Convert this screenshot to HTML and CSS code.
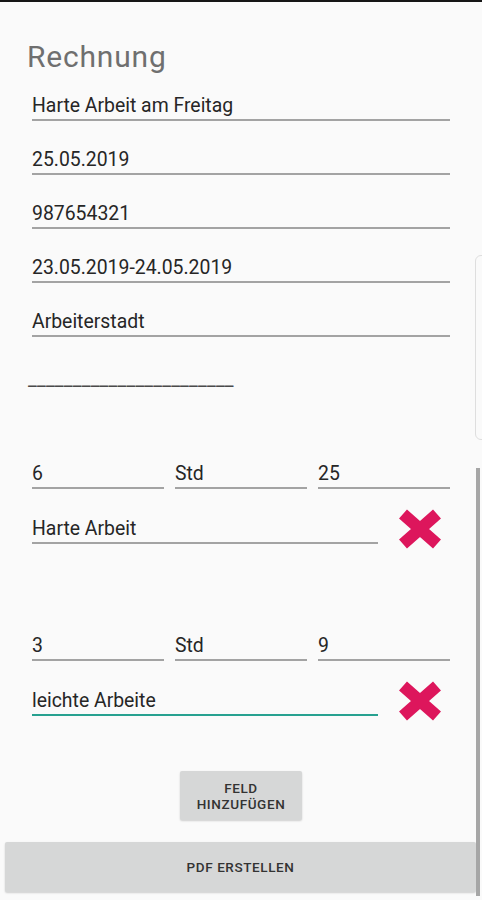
FILE: index.html
```html
<!DOCTYPE html>
<html>
<head>
    <title>Rechnung</title>
    <link rel="stylesheet" href="styles.css">
</head>
<body>
    <div class="screen">
        <h1 class="title">Rechnung</h1>

        <div class="form">
            <div class="field">Harte Arbeit am Freitag</div>
            <div class="field">25.05.2019</div>
            <div class="field">987654321</div>
            <div class="field">23.05.2019-24.05.2019</div>
            <div class="field">Arbeiterstadt</div>

            <div class="separator">_______________________</div>

            <!-- first entry -->
            <div class="entry entry-first">
                <div class="entry-row">
                    <div class="field">6</div>
                    <div class="field">Std</div>
                    <div class="field">25</div>
                </div>
                <div class="entry-desc">
                    <div class="field">Harte Arbeit</div>
                    <svg class="remove" viewBox="0 0 46 42" width="46" height="42">
                        <path d="M6 6 L40 36 M40 6 L6 36" stroke="#dd165c" stroke-width="12" fill="none"/>
                    </svg>
                </div>
            </div>

            <!-- second entry -->
            <div class="entry">
                <div class="entry-row">
                    <div class="field">3</div>
                    <div class="field">Std</div>
                    <div class="field">9</div>
                </div>
                <div class="entry-desc">
                    <div class="field focused">leichte Arbeite</div>
                    <svg class="remove" viewBox="0 0 46 42" width="46" height="42">
                        <path d="M6 6 L40 36 M40 6 L6 36" stroke="#dd165c" stroke-width="12" fill="none"/>
                    </svg>
                </div>
            </div>
        </div>

        <div class="add-wrap">
            <button class="btn btn-add">FELD<br>HINZUFÜGEN</button>
        </div>
        <button class="btn btn-pdf">PDF ERSTELLEN</button>

        <div class="edge-handle"></div>
        <div class="scrollbar"></div>
    </div>
</body>
</html>
```

FILE: styles.css
```css
body {
    margin: 0;
    background-color: #fafafa;
    font-family: Roboto, "Noto Sans", sans-serif;
    overflow: hidden;
}

.screen {
    position: relative;
    height: 898px;
    border-top: 2px solid #161616;
}

.title {
    margin: 37px 0 20px 27px;
    font-size: 30px;
    font-weight: 400;
    line-height: 36px;
    letter-spacing: 0.8px;
    color: #6f6f6f;
}

.form {
    padding: 0 32px;
}

.field {
    font-size: 19.4px;
    line-height: 22px;
    padding-bottom: 2px;
    border-bottom: 2px solid #a3a3a3;
    color: #262626;
    margin-bottom: 28px;
    white-space: nowrap;
}

.field.focused {
    border-bottom-color: #27a190;
}

.separator {
    margin: 31px 0 0 -4px;
    font-size: 19.4px;
    line-height: 22px;
    letter-spacing: 0.2px;
    color: #4a4a4a;
    white-space: nowrap;
}

.entry-row {
    display: grid;
    grid-template-columns: 1fr 1fr 1fr;
    column-gap: 11px;
}

.entry-row .field {
    margin-bottom: 29px;
}

.entry-first {
    margin-top: 73px;
}

.entry + .entry {
    margin-top: 91px;
}

.entry-desc {
    display: flex;
    align-items: center;
}

.entry-desc .field {
    width: 346px;
    margin-bottom: 0;
}

.remove {
    margin: -10px 0 -6px 19px;
}

.add-wrap {
    display: flex;
    justify-content: center;
    margin-top: 55px;
}

.btn {
    font-family: Roboto, "Noto Sans", sans-serif;
    font-weight: 500;
    font-size: 13.5px;
    letter-spacing: 0.6px;
    color: #333;
    background-color: #d6d7d7;
    border: none;
    border-radius: 2px;
    box-shadow: 0 1px 2px rgba(0, 0, 0, 0.18);
}

.btn-add {
    width: 122px;
    height: 49px;
    line-height: 16px;
    padding: 0;
}

.btn-pdf {
    display: block;
    width: 471px;
    height: 50px;
    margin: 22px 0 0 5px;
}

.edge-handle {
    position: absolute;
    left: 475px;
    top: 253px;
    width: 12px;
    height: 183px;
    border: 1px solid #dedede;
    border-radius: 6px;
}

.scrollbar {
    position: absolute;
    left: 476px;
    top: 466px;
    width: 4px;
    height: 428px;
    background-color: #a6a6a6;
}
```
